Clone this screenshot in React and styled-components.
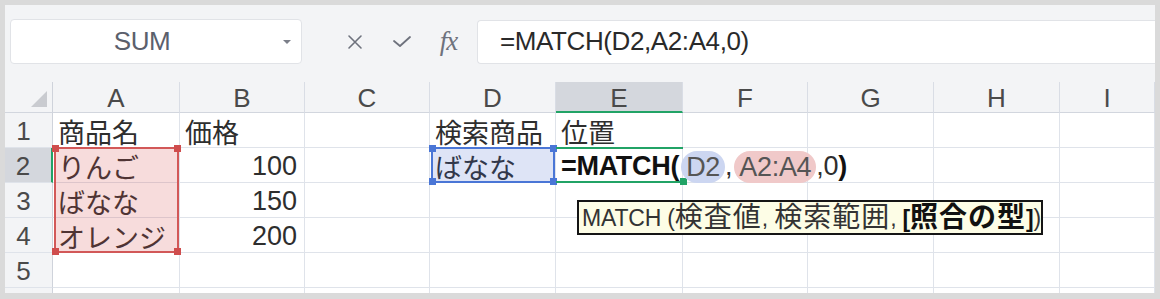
import React from "react";
import styled, { createGlobalStyle, css } from "styled-components";

const GlobalStyle = createGlobalStyle`
  html, body {
    margin: 0;
    padding: 0;
    background: #dadada;
  }
  body {
    font-family: "Liberation Sans", "Noto Sans CJK JP", sans-serif;
  }
`;

const Frame = styled.div`
  width: 1150px;
  height: 288px;
  margin: 5px;
  background: #f3f4f6;
  overflow: hidden;
  display: flex;
  flex-direction: column;
`;

const Toolbar = styled.div`
  margin-top: 14px;
  height: 45px;
  padding-left: 5px;
  display: flex;
  align-items: center;
  flex-shrink: 0;
`;

const NameBox = styled.div`
  width: 292px;
  height: 45px;
  box-sizing: border-box;
  background: #fff;
  border: 1px solid #e1e3e7;
  border-radius: 4px;
  display: flex;
  align-items: center;
`;

const NameText = styled.span`
  flex: 1;
  text-align: center;
  font-size: 26px;
  color: #5b606c;
  letter-spacing: -0.5px;
`;

const DropArrow = styled.span`
  width: 28px;
  display: flex;
  justify-content: center;
  &::before {
    content: "";
    border-left: 4px solid transparent;
    border-right: 4px solid transparent;
    border-top: 4px solid #7b7f89;
  }
`;

const IconGroup = styled.div`
  display: flex;
  margin-left: 29px;
`;

const IconSlot = styled.span`
  width: 47px;
  height: 45px;
  display: flex;
  align-items: center;
  justify-content: center;
  color: #6e727d;
`;

const Fx = styled.span`
  font-family: "Liberation Serif", serif;
  font-style: italic;
  font-size: 27px;
  color: #6e727d;
  letter-spacing: -1px;
`;

const FormulaInput = styled.div`
  margin-left: 5px;
  flex: 1;
  height: 44px;
  box-sizing: border-box;
  background: #fff;
  border: 1px solid #e1e3e7;
  border-right: none;
  border-radius: 4px 0 0 4px;
  display: flex;
  align-items: center;
  padding-left: 22px;
  font-size: 26px;
  letter-spacing: -0.4px;
  color: #2a2a2a;
`;

const Sheet = styled.div`
  margin-top: 18px;
  display: grid;
  grid-template-columns: 48px 127px 125px 125px 126px 127px 125px 126px 126px 1fr;
  grid-template-rows: 31px repeat(6, 35px);
`;

const place = css`
  grid-row: ${(p) => p.$r};
  grid-column: ${(p) => p.$c};
`;

const Corner = styled.div`
  ${place}
  box-sizing: border-box;
  border-right: 1px solid #cfd3db;
  border-bottom: 1px solid #d2d6de;
  position: relative;
  &::after {
    content: "";
    position: absolute;
    right: 5px;
    bottom: 5px;
    border-left: 16px solid transparent;
    border-bottom: 16px solid #c9cbd0;
  }
`;

const ColHead = styled.div`
  ${place}
  box-sizing: border-box;
  display: flex;
  align-items: center;
  justify-content: center;
  font-size: 26px;
  color: #4a4a4a;
  padding-top: 3px;
  border-right: 1px solid #d9dde5;
  border-bottom: ${(p) => (p.$active ? "2px solid #21a366" : "1px solid #d2d6de")};
  background: ${(p) => (p.$active ? "#d4d7dd" : "#f3f4f6")};
`;

const RowHead = styled.div`
  ${place}
  box-sizing: border-box;
  display: flex;
  align-items: center;
  justify-content: center;
  padding: 3px 10px 0 0;
  font-size: 26px;
  color: #4a4a4a;
  border-right: ${(p) => (p.$active ? "2px solid #21a366" : "1px solid #cfd3db")};
  border-bottom: 1px solid #dfe3ea;
  background: ${(p) => (p.$active ? "#d4d7dd" : "#f3f4f6")};
`;

const Cell = styled.div`
  ${place}
  box-sizing: border-box;
  position: relative;
  display: flex;
  align-items: center;
  justify-content: ${(p) => (p.$num ? "flex-end" : "flex-start")};
  padding: 3px 7px 0 5px;
  font-size: 27px;
  color: #2e2e2e;
  white-space: nowrap;
  background: #fff;
  border-right: 1px solid #dfe3ea;
  border-bottom: 1px solid #dfe3ea;
`;

const tones = {
  red: { line: "#d25858", fill: "rgba(214, 80, 80, 0.2)" },
  blue: { line: "#4a76d6", fill: "rgba(70, 105, 205, 0.18)" },
};

const Range = styled.div`
  ${place}
  position: relative;
  z-index: 2;
  pointer-events: none;
  margin: -1px 1px 0 1px;
  border: 2px solid ${(p) => tones[p.$tone].line};
  background: ${(p) => tones[p.$tone].fill};
`;

const Handle = styled.span`
  position: absolute;
  width: 7px;
  height: 7px;
  background: ${(p) => p.$color};
  ${(p) => (p.$top ? "top: -4px;" : "bottom: -4px;")}
  ${(p) => (p.$left ? "left: -4px;" : "right: -4px;")}
`;

const Active = styled.div`
  ${place}
  position: relative;
  z-index: 2;
  pointer-events: none;
  margin-top: -1px;
  border-top: 2px solid #21a366;
  border-bottom: 2px solid #21a366;
`;

const FormulaText = styled.span`
  position: relative;
  z-index: 3;
  display: flex;
  align-items: center;
  letter-spacing: -0.3px;
`;

const Bold = styled.b`
  font-weight: 700;
  color: #111;
`;

const Pill = styled.span`
  display: inline-block;
  padding: 0 5px;
  margin: 0 0 0 2px;
  line-height: 32px;
  border-radius: 16px;
  color: #555;
  background: ${(p) => (p.$tone === "blue" ? "#ccd6f1" : "#f0c9c9")};
`;

const Tip = styled.div`
  position: absolute;
  left: 21px;
  top: 52px;
  z-index: 5;
  width: 466px;
  height: 35px;
  box-sizing: border-box;
  padding: 1px 0 0 3px;
  display: flex;
  align-items: center;
  background: #fdfde6;
  border: 2px solid #151515;
  font-size: 23px;
  color: #333;
  letter-spacing: -0.2px;
  white-space: pre;
`;

const TipJa = styled.span`
  font-size: 28px;
  line-height: 1;
  letter-spacing: 1px;
`;

const TipStrong = styled.b`
  font-weight: 700;
  color: #111;
`;

const COLS = ["A", "B", "C", "D", "E", "F", "G", "H", "I"];

const DATA = {
  1: { A: "商品名", B: "価格", D: "検索商品", E: "位置" },
  2: { A: "りんご", B: 100, D: "ばなな" },
  3: { A: "ばなな", B: 150 },
  4: { A: "オレンジ", B: 200 },
};

const CloseIcon = () => (
  <svg width="16" height="16" viewBox="0 0 16 16" fill="none" stroke="currentColor" strokeWidth="1.6" strokeLinecap="round">
    <path d="M2 2 L14 14 M14 2 L2 14" />
  </svg>
);

const CheckIcon = () => (
  <svg width="20" height="14" viewBox="0 0 20 14" fill="none" stroke="currentColor" strokeWidth="1.8" strokeLinecap="round" strokeLinejoin="round">
    <path d="M2 6 L8 11 L18 2" />
  </svg>
);

function Handles({ color }) {
  return (
    <>
      <Handle $color={color} $top $left />
      <Handle $color={color} $top />
      <Handle $color={color} $left />
      <Handle $color={color} />
    </>
  );
}

function Formula() {
  return (
    <FormulaText>
      <Bold>=MATCH(</Bold>
      <Pill $tone="blue">D2</Pill>,<Pill $tone="red">A2:A4</Pill>,0<Bold>)</Bold>
    </FormulaText>
  );
}

function Tooltip() {
  return (
    <Tip>
      {"MATCH ("}
      <TipJa>検査値</TipJa>
      {", "}
      <TipJa>検索範囲</TipJa>
      {", "}
      <TipStrong>
        [<TipJa>照合の型</TipJa>]
      </TipStrong>
      {")"}
    </Tip>
  );
}

export default function App() {
  const rows = [1, 2, 3, 4, 5, 6];
  return (
    <>
      <GlobalStyle />
      <Frame>
        <Toolbar>
          <NameBox>
            <NameText>SUM</NameText>
            <DropArrow />
          </NameBox>
          <IconGroup>
            <IconSlot>
              <CloseIcon />
            </IconSlot>
            <IconSlot>
              <CheckIcon />
            </IconSlot>
            <IconSlot>
              <Fx>fx</Fx>
            </IconSlot>
          </IconGroup>
          <FormulaInput>=MATCH(D2,A2:A4,0)</FormulaInput>
        </Toolbar>

        <Sheet>
          <Corner $r={1} $c={1} />
          {COLS.map((col, i) => (
            <ColHead key={col} $r={1} $c={i + 2} $active={col === "E"}>
              {col}
            </ColHead>
          ))}

          {rows.map((r) => (
            <React.Fragment key={r}>
              <RowHead $r={r + 1} $c={1} $active={r === 2}>
                {r <= 5 ? r : null}
              </RowHead>
              {COLS.map((col, i) => {
                const v = DATA[r] && DATA[r][col];
                const isFormula = r === 2 && col === "E";
                return (
                  <Cell key={col} $r={r + 1} $c={i + 2} $num={typeof v === "number"}>
                    {isFormula ? (
                      <>
                        <Formula />
                        <Tooltip />
                      </>
                    ) : (
                      v
                    )}
                  </Cell>
                );
              })}
            </React.Fragment>
          ))}

          <Range $r="3 / 6" $c={2} $tone="red">
            <Handles color="#cf4d4d" />
          </Range>
          <Range $r="3 / 4" $c={5} $tone="blue">
            <Handles color="#4a76d6" />
          </Range>
          <Active $r="3 / 4" $c={6}>
            <Handle $color="#21a366" />
          </Active>
        </Sheet>
      </Frame>
    </>
  );
}
